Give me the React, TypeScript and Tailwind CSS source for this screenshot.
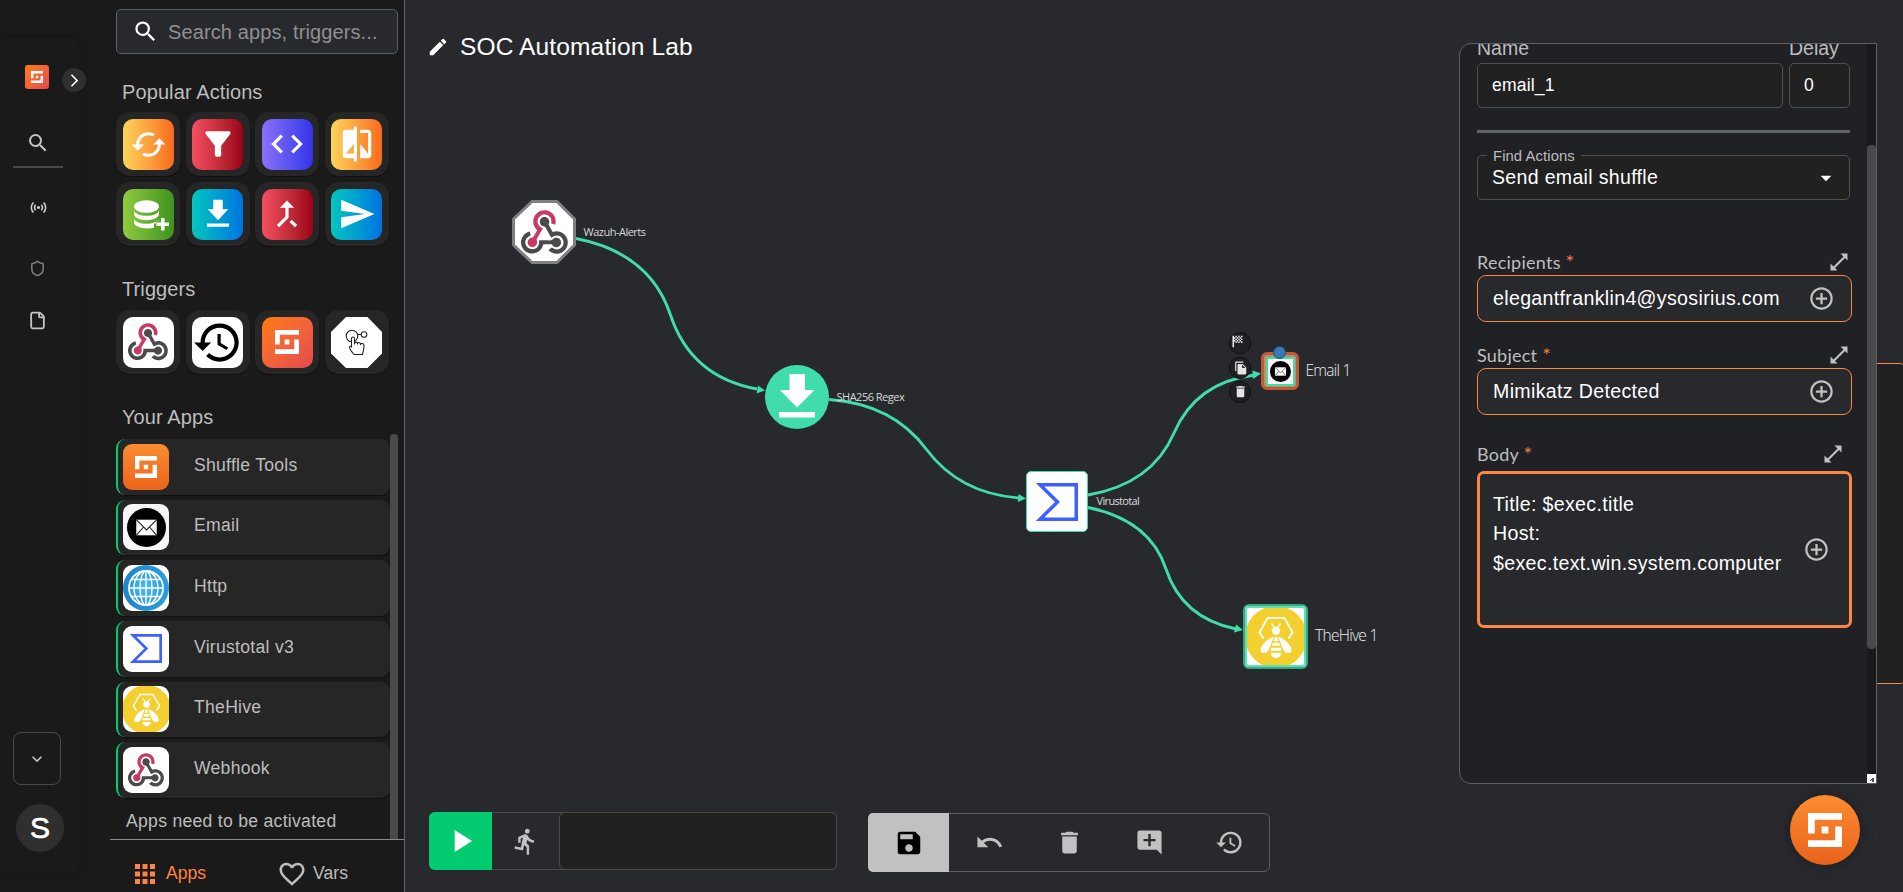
import React from "react";
import {
  MdSearch, MdCached, MdFilterAlt, MdCode, MdCompare, MdCallMerge, MdSend, MdHistory, MdEdit, MdSave, MdUndo,
  MdDelete, MdAddComment, MdFileCopy, MdPlayArrow, MdDirectionsRun, MdApps, MdFavoriteBorder, MdAddCircleOutline,
  MdArrowDropDown, MdKeyboardArrowDown, MdArrowForwardIos, MdSensors, MdSportsScore,
} from "react-icons/md";
import { File, Shield } from "lucide-react";

function ShuffleMark({ className }: { className: string }) {
  return (
    <svg viewBox="0 0 5 5" className={className} fill="#fff">
      <path d="M0 0H5V1H1V3H0ZM2 2H3V3H2ZM4 2H5V5H0V4H4Z" />
    </svg>
  );
}

function WebhookMark({ className }: { className: string }) {
  return (
    <svg viewBox="0 0 256 239" className={className}>
      <path fill="#C73A63" d="M119.54 100.5C108.93 118.34 98.76 135.61 88.39 152.75C85.72 157.15 84.4 160.74 86.53 166.33C92.41 181.79 84.12 196.83 68.54 200.91C53.84 204.76 39.52 195.1 36.6 179.37C34.02 165.44 44.83 151.78 60.18 149.61C61.47 149.42 62.78 149.4 64.94 149.24C72.47 136.62 80.18 123.7 88.3 110.07C73.61 95.47 64.87 78.39 66.8 57.23C68.17 42.27 74.05 29.35 84.8 18.75C105.39 -1.54 136.81 -4.82 161.05 10.75C184.33 25.71 195 54.85 185.91 79.78C179.05 77.92 172.15 76.05 164.56 73.99C167.42 60.13 165.31 47.68 155.96 37.01C149.78 29.97 141.85 26.28 132.84 24.92C114.76 22.19 97.02 33.8 91.76 51.54C85.78 71.67 94.82 88.11 119.54 100.5" />
      <path fill="#4B4B4B" d="M149.84 79.41C157.32 92.6 164.91 105.98 172.43 119.25C210.45 107.48 239.11 128.53 249.4 151.06C261.82 178.28 253.33 210.52 228.93 227.31C203.89 244.55 172.23 241.61 150.04 219.46C155.69 214.73 161.38 209.97 167.45 204.9C189.36 219.09 208.53 218.42 222.75 201.61C234.89 187.28 234.62 165.9 222.14 151.86C207.73 135.67 188.43 135.17 165.1 150.72C155.43 133.55 145.58 116.52 136.21 99.23C133.05 93.4 129.56 90.02 122.44 88.79C110.55 86.73 102.87 76.51 102.41 65.07C101.96 53.75 108.62 43.52 119.04 39.54C129.36 35.59 141.48 38.78 148.42 47.55C154.09 54.72 155.9 62.79 152.91 71.64C152.08 74.1 151.01 76.49 149.84 79.41" />
      <path fill="#4A4A4A" d="M167.71 187.21L121.94 187.21C117.55 205.25 108.07 219.82 91.75 229.09C79.05 236.29 65.37 238.73 50.81 236.38C24.01 232.05 2.09 207.92 .16 180.75C-2.03 149.96 19.13 122.6 47.33 116.45C49.28 123.52 51.25 130.66 53.2 137.72C27.32 150.92 18.36 167.55 25.61 188.35C31.98 206.66 50.09 216.69 69.75 212.81C89.83 208.85 99.96 192.16 98.72 165.38C117.76 165.38 136.81 165.18 155.85 165.48C163.28 165.59 169.02 164.82 174.62 158.27C183.84 147.48 200.81 148.46 210.74 158.64C220.89 169.05 220.4 185.8 209.66 195.77C199.3 205.39 182.93 204.87 173.24 194.51C171.25 192.37 169.68 189.84 167.71 187.21" />
    </svg>
  );
}

function VirustotalMark({ className }: { className: string }) {
  return (
    <svg viewBox="0 0 42 38" className={className} fill="none" stroke="#3D61FF" strokeWidth="3.5">
      <path d="M4 1.75H40.25V36.25H4L21.5 19Z" />
    </svg>
  );
}

function BeeMark({ className }: { className: string }) {
  return (
    <svg viewBox="0 0 60 60" className={className}>
      <circle cx="30" cy="30" r="30" fill="#F3D02F" />
      <path d="M18 31.5L14 25.5L22 11.5H38L46 25.5L42 31.5" fill="none" stroke="#fff" strokeWidth="1.8" />
      <path d="M28.5 21L25.5 16.5M31.5 21L34.5 16.5" stroke="#fff" strokeWidth="1.4" />
      <circle cx="30" cy="24" r="4" fill="#fff" />
      <path d="M28 29.5C22 31.5 15 38 15 42.5C15 47 21.5 46.5 23.5 41.5Z" fill="#fff" />
      <path d="M32 29.5C38 31.5 45 38 45 42.5C45 47 38.5 46.5 36.5 41.5Z" fill="#fff" />
      <path d="M29 30H31L32.2 34H27.8ZM27 35.5H33L34 38.5H26ZM25.5 40.3H34.5L35.2 43.3H24.8ZM24.7 45.3H35.3C35 48.5 32 50.5 30 50.5C28 50.5 25 48.5 24.7 45.3Z" fill="#fff" />
    </svg>
  );
}

function EmailMark({ className }: { className: string }) {
  return (
    <svg viewBox="0 0 40 40" className={className}>
      <circle cx="20" cy="20" r="20" fill="#000" />
      <rect x="9.5" y="12" width="21" height="16" fill="#fff" />
      <path d="M9.5 12L20 22.5L30.5 12M9.5 28L17 19.5M30.5 28L23 19.5" fill="none" stroke="#222" strokeWidth="1.1" />
    </svg>
  );
}

function GlobeMark() {
  return (
    <svg viewBox="0 0 46 46" className="size-full">
      <defs>
        <linearGradient id="ring" x1="0" y1="0" x2="1" y2="0">
          <stop offset="0" stopColor="#1d86c6" />
          <stop offset="1" stopColor="#2a9fdd" />
        </linearGradient>
        <radialGradient id="sea">
          <stop offset="0" stopColor="#4cbdf0" />
          <stop offset="1" stopColor="#2c9fdc" />
        </radialGradient>
      </defs>
      <circle cx="23" cy="23" r="23" fill="url(#ring)" />
      <g fill="none" stroke="#fff" strokeWidth="1.4">
        <circle cx="23" cy="23" r="17" fill="url(#sea)" strokeWidth="1.8" />
        <ellipse cx="23" cy="23" rx="12" ry="17" />
        <ellipse cx="23" cy="23" rx="6" ry="17" />
        <path d="M6 23H40M23 6V40M9 14.5H37M9 31.5H37" />
      </g>
    </svg>
  );
}

const OCTAGON = "M15 0H36.5L51 15V36.5L36.5 51H15L0 36.5V15Z";

function DatabasePlus() {
  return (
    <svg viewBox="0 0 51 51" className="size-full" fill="#fff">
      <ellipse cx="23.5" cy="17.5" rx="12.5" ry="6.3" />
      <path d="M11 21C11 24.5 17 26.8 23.5 26.8S36 24.5 36 21V25C36 28.500 30 31.200 23.500 31.200S11 28.500 11 25Z" />
      <path d="M11 29C11 32.500 17 34.800 23.500 34.800C29 34.800 34 33 35.500 30.500V31.800H33V34.500H31V38.800C22 40.500 11 38.500 11 33Z" />
      <path d="M38 29H41.5V33.5H46V37H41.5V41.5H38V37H33.5V33.5H38Z" />
    </svg>
  );
}

function DownloadGlyph({ className }: { className: string }) {
  return (
    <svg viewBox="0 0 24 24" className={className} fill="#fff">
      <path d="M5 20h14v-2H5v2zM18.5 9H15V3H9v6H5.5l6.5 7z" />
    </svg>
  );
}

function Tile({ fill, children }: { fill: string; children: React.ReactNode }) {
  return (
    <div className="flex size-16 items-center justify-center rounded-[14px] bg-[#262626] shadow-[0_1px_1px_rgba(0,0,0,.4)]">
      <div className={`flex size-[51px] items-center justify-center overflow-hidden rounded-[10px] ${fill}`}>{children}</div>
    </div>
  );
}

const YELLOW = "bg-linear-to-r from-[#fbd45c] to-[#f8691b]";
const RED = "bg-linear-to-r from-[#f54f60] to-[#9a0018]";
const PURPLE = "bg-linear-to-r from-[#8a70f9] to-[#3431e8]";
const GREEN = "bg-linear-to-r from-[#8fcb40] to-[#3d931f]";
const TEAL = "bg-linear-to-r from-[#0bc6bd] to-[#0372e0]";

function AppRow({ name, children, fill = "bg-white" }: { name: string; children: React.ReactNode; fill?: string }) {
  return (
    <div className="flex h-[55.67px] shrink-0 items-center rounded-[9px] border-l-2 border-[#02cb70] bg-[#262626] pl-[5px] shadow-[0_1px_1px_rgba(0,0,0,.4)]">
      <div className={`flex size-[46px] items-center justify-center overflow-hidden rounded-[9px] ${fill}`}>{children}</div>
      <span className="-mt-1 ml-[25px] text-[17.6px] tracking-[.27px] text-[#bdbdbd]">{name}</span>
    </div>
  );
}

function Rail() {
  return (
    <nav className="relative mt-[38px] flex h-[837px] w-[79px] shrink-0 flex-col rounded-r-lg bg-[#1a1a1a] shadow-[0_0_10px_rgba(0,0,0,.2)]">
      <div className="mt-[27px] ml-[25px] flex size-6 items-center justify-center rounded-[3px] bg-linear-to-br from-[#ff7c00] to-[#e5484d]">
        <ShuffleMark className="size-3" />
      </div>
      <div className="absolute top-[30px] left-[62px] flex size-6 items-center justify-center rounded-full bg-[#2f2f2f]">
        <MdArrowForwardIos className="size-[15px] text-white" />
      </div>
      <MdSearch className="mt-[42px] ml-[26px] size-6 text-[#c4c4c4]" />
      <div className="mt-[11px] ml-[13px] h-[2px] w-[50px] bg-[#494949]" />
      <MdSensors className="mt-[30px] ml-[28.5px] size-[19px] text-[#cfcfcf]" />
      <Shield className="mt-[43px] ml-[29px] size-[17px] text-[#7d7d7d]" strokeWidth={2.2} />
      <File className="mt-[34px] ml-[28px] size-[19px] text-[#c4c4c4]" strokeWidth={2.3} />
      <div className="mt-auto ml-[13px] flex h-[53px] w-12 items-center justify-center rounded-lg border border-[#494949]">
        <MdKeyboardArrowDown className="size-5 text-[#c4c4c4]" />
      </div>
      <div className="mt-[19px] mb-[23px] ml-4 flex size-12 items-center justify-center rounded-full bg-[#2f2f2f] pb-px text-[30px] leading-none text-white [-webkit-text-stroke:.7px_white]">
        S
      </div>
    </nav>
  );
}

function Sidebar() {
  return (
    <aside className="ml-[31px] flex h-full w-[295px] shrink-0 flex-col border-r border-[#5c5f64] text-[#bdbdbd]">
      <div className="mt-[9px] ml-[6px] flex h-[45px] w-[282px] shrink-0 items-center rounded-[5px] border border-[#5c5f64] bg-[#27292d]">
        <MdSearch className="ml-[14.5px] size-[27px] text-white" />
        <span className="ml-[9.500px] text-[20px] tracking-[.12px] text-[#8f9092]">Search apps, triggers...</span>
      </div>
      <h2 className="mt-[23px] ml-3 h-[30px] shrink-0 text-[20px] leading-[30px] tracking-[.1px]">Popular Actions</h2>
      <div className="mt-[5px] ml-[6px] grid w-[273px] shrink-0 grid-cols-4 justify-between gap-x-[5.67px] gap-y-[6px]">
        <Tile fill={YELLOW}><MdCached className="size-[37px] text-white" /></Tile>
        <Tile fill={RED}><MdFilterAlt className="size-[38px] text-white" /></Tile>
        <Tile fill={PURPLE}><MdCode className="size-[38px] text-white" /></Tile>
        <Tile fill={YELLOW}><MdCompare className="size-[38px] text-white" /></Tile>
        <Tile fill={GREEN}><DatabasePlus /></Tile>
        <Tile fill={TEAL}><DownloadGlyph className="size-[38px]" /></Tile>
        <Tile fill={RED}><MdCallMerge className="size-[38px] text-white" /></Tile>
        <Tile fill={TEAL}><MdSend className="size-[38px] text-white" /></Tile>
      </div>
      <h2 className="mt-[28px] ml-3 h-[30px] shrink-0 text-[20px] leading-[30px] tracking-[.1px]">Triggers</h2>
      <div className="mt-[6px] ml-[6px] grid w-[273px] shrink-0 grid-cols-4 gap-x-[5.67px]">
        <Tile fill="bg-white"><WebhookMark className="w-10" /></Tile>
        <Tile fill="bg-white"><MdHistory className="size-[51px] text-black" /></Tile>
        <Tile fill="bg-linear-to-br from-[#ff7c00] to-[#e5484d]"><ShuffleMark className="size-6" /></Tile>
        <Tile fill="">
          <svg viewBox="0 0 51 51" className="size-full">
            <path d={OCTAGON} fill="#fff" />
            <g fill="#fff" stroke="#222" strokeWidth="1.1" strokeLinejoin="round">
              <path d="M27 17.5H30" />
              <circle cx="21" cy="19" r="5.8" />
              <circle cx="33" cy="17.5" r="2.8" />
              <path d="M20.5 30V21.5C20.5 19.500 23.500 19.500 23.500 21.500V27C23.500 24.500 26.500 24.500 26.500 27C26.500 25 29.500 25 29.500 27.500C29.500 26 33 26 33 28.500C33 32 32.500 33.500 31.500 37.500H23C21.500 35 19 33.500 18.500 30.500C18.500 29 20 29 20.500 30Z" />
            </g>
          </svg>
        </Tile>
      </div>
      <h2 className="mt-[28px] ml-3 h-[30px] shrink-0 text-[20px] leading-[30px] tracking-[.1px]">Your Apps</h2>
      <div className="mt-[2px] ml-[6px] flex h-[405px] w-[282px] shrink-0 overflow-hidden">
        <div className="flex w-[274px] shrink-0 flex-col gap-[5px] pt-[5px]">
          <AppRow name="Shuffle Tools" fill="bg-linear-to-b from-[#fc8c31] to-[#e9651a]"><ShuffleMark className="size-[22px]" /></AppRow>
          <AppRow name="Email" fill="bg-[#f7f7f7]"><EmailMark className="size-[39px]" /></AppRow>
          <AppRow name="Http"><GlobeMark /></AppRow>
          <AppRow name="Virustotal v3"><VirustotalMark className="w-8" /></AppRow>
          <AppRow name="TheHive"><BeeMark className="size-[49px] shrink-0" /></AppRow>
          <AppRow name="Webhook"><WebhookMark className="w-9" /></AppRow>
          <p className="mt-[6px] ml-[10px] text-[17.6px] leading-6 tracking-[.28px] whitespace-nowrap">Apps need to be activated</p>
        </div>
        <div className="w-2 rounded-t-md bg-[#4a4a4a]" />
      </div>
      <div className="flex flex-1 items-center border-t border-[#87898c] pt-[15px] text-[17.6px]">
        <MdApps className="ml-5 size-[30px] text-[#ff8544]" />
        <span className="ml-[6px] text-[#ff8544]">Apps</span>
        <MdFavoriteBorder className="ml-[71px] size-[30px]" />
        <span className="ml-[6px]">Vars</span>
      </div>
    </aside>
  );
}

function Toolbars() {
  return (
    <div className="mb-5 flex items-end">
      <div className="mb-[2px] flex h-[58px] w-[408px] rounded-md border border-[#494949]">
        <div className="-my-px -ml-px flex w-[63px] items-center justify-center rounded-l-md bg-[#02cb70]">
          <MdPlayArrow className="size-[38px] text-white" />
        </div>
        <div className="flex w-[67px] items-center justify-center">
          <MdDirectionsRun className="size-[29px] text-[#c1c1c1]" />
        </div>
        <div className="-my-px -mr-px flex-1 rounded-md border border-[#494949] bg-[#212121]" />
      </div>
      <div className="ml-[31px] flex h-[59px] w-[402px] rounded-md border border-[#5d5f63] text-[#c1c1c1]">
        <div className="-my-px -ml-px flex w-[81px] items-center justify-center rounded-l-[5px] bg-[#c1c1c1] text-black"><MdSave className="size-[30px]" /></div>
        <div className="flex w-20 items-center justify-center"><MdUndo className="size-[29px]" /></div>
        <div className="flex w-20 items-center justify-center"><MdDelete className="size-[29px]" /></div>
        <div className="flex w-20 items-center justify-center"><MdAddComment className="size-[29px]" /></div>
        <div className="flex w-20 items-center justify-center"><MdHistory className="size-[29px]" /></div>
      </div>
    </div>
  );
}

function Graph() {
  return (
    <div className="absolute inset-0 overflow-hidden font-['Open_Sans','Noto_Sans',sans-serif] text-[#d8d9da]">
      <svg viewBox="405 0 1498 892" className="absolute inset-0 h-full w-full" fill="none">
        <g stroke="#41DCAB" strokeWidth="2.9">
          <path d="M576 238.500Q650 253 670.500 315Q691 377 757 389" />
          <path d="M829 399.500Q893 404 926.500 449.500Q960 494 1020 498" />
          <path d="M1088 495Q1152 484 1174 433Q1196 382 1255 375" />
          <path d="M1088 507.500Q1150 520 1166 569Q1182 618 1236 629" />
        </g>
        <g fill="#41DCAB">
          <path d="M765 390.500L756.500 393.500L758 385.500Z" />
          <path d="M1026 498.500L1018 502L1018.500 494Z" />
          <path d="M1261 373.500L1253 379L1252.500 370.500Z" />
          <path d="M1243 630L1234 632.500L1236 624.500Z" />
        </g>
        <path d="M532 201.500H557L574.500 219V245L557 262.500H532L513.500 245V219Z" fill="#fff" stroke="#808080" strokeWidth="3" strokeLinejoin="round" />
        <circle cx="797" cy="397" r="32" fill="#41DCAB" />
        <path d="M789.500 374H805V390H814.500L797 407.500L780 390H789.500Z" fill="#fff" />
        <path d="M779 412H815V417.500H779Z" fill="#fff" />
        <g fill="#1f2023" stroke="#111214">
          <circle cx="1240" cy="343.300" r="10.700" />
          <circle cx="1240" cy="367.800" r="10.700" />
          <circle cx="1240" cy="392" r="10.700" />
        </g>
      </svg>
      <WebhookMark className="absolute top-[210px] left-[116px] w-[47px]" />
      <span className="absolute top-[223.5px] left-[178.5px] text-[11px] leading-4 tracking-[-.5px]">Wazuh-Alerts</span>
      <span className="absolute top-[388.5px] left-[431.5px] text-[11px] leading-4 tracking-[-.5px]">SHA256 Regex</span>
      <div className="absolute top-[471px] left-[621px] flex h-[61px] w-[62px] items-center justify-center rounded-[5px] border border-[#41DCAB] bg-white">
        <VirustotalMark className="w-[42px]" />
      </div>
      <span className="absolute top-[492.5px] left-[691.5px] text-[11px] leading-4 tracking-[-.65px]">Virustotal</span>
      <div className="absolute top-[604px] left-[838px] flex size-[65px] items-center justify-center overflow-hidden rounded-[6px] border-2 border-[#36a983] bg-white">
        <BeeMark className="size-[62px] shrink-0" />
        <div className="absolute inset-0 rounded-[4px] border-2 border-[#5ce0b6]" />
      </div>
      <span className="absolute top-[622.5px] left-[910px] text-[15.5px] leading-6 font-light tracking-[-.7px] text-[#f0f0f0]">TheHive 1</span>
      <div className="absolute top-[352px] left-[856px] flex size-[38px] items-center justify-center rounded-[6px] border-[3px] border-[#bd5a3b] bg-[#c98b62] p-[1.5px]">
        <div className="flex size-full items-center justify-center border-2 border-[#41DCAB] bg-[#f7f7f7]">
          <EmailMark className="size-[21px] shrink-0" />
        </div>
      </div>
      <div className="absolute top-[346px] left-[868px] size-[13px] rounded-full border border-[#1c4e7c] bg-[#337ab7]" />
      <span className="absolute top-[357.5px] left-[900.5px] text-[15.5px] leading-6 font-light tracking-[-.75px] text-[#f0f0f0]">Email 1</span>
      <MdSportsScore className="absolute top-[333px] left-[824px] size-[17px] text-[#f4f4f4]" />
      <MdFileCopy className="absolute top-[361px] left-[828.5px] size-[14px] text-[#e4e4e4]" />
      <MdDelete className="absolute top-[384px] left-[827.5px] size-[15px] text-[#e4e4e4]" />
    </div>
  );
}

function FieldLabel({ text, inset }: { text: string; inset: string }) {
  return (
    <div className={`flex h-6 items-center justify-between ${inset}`}>
      <span className="-mt-[2px] font-['Lato','Open_Sans',sans-serif] text-[18px] tracking-[.25px] text-[#bdbdbd]">
        {text} <span className="text-[20px] leading-none text-[#ff7a3d]">*</span>
      </span>
      <svg viewBox="0 0 18 18" className="-mt-[3px] size-[18px]" fill="#c1c1c1">
        <path d="M10.500 .5H17.500V7.500L15 5L5 15L7.500 17.500H.5V10.500L3.500 13.500L13.500 3.500Z" />
      </svg>
    </div>
  );
}

function Inspector() {
  return (
    <div className="relative mt-[43px] flex h-[741px] w-[418px] overflow-hidden rounded-xl rounded-r-none border border-[#5c5f64] bg-[#202125]">
      <div className="flex flex-1 flex-col pl-[17px] text-white">
        <div className="-mt-[9px] flex h-[27px] text-[19.5px] leading-[27px] text-[#bdbdbd]">
          <span className="w-[312px]">Name</span>
          <span>Delay</span>
        </div>
        <div className="mt-[1px] flex gap-[6px] text-[17.6px] tracking-[.15px]">
          <div className="flex h-[45px] w-[306px] items-center rounded-[5px] border border-[#4f5052] bg-[#212121] pl-[14px]">email_1</div>
          <div className="flex h-[45px] w-[61px] items-center rounded-[5px] border border-[#4f5052] bg-[#212121] pl-[14px]">0</div>
        </div>
        <div className="mt-[22px] h-[3px] w-[373px] bg-[#5e6366]" />
        <div className="relative mt-[22px] flex h-[45px] w-[373px] items-center justify-between rounded-[5px] border border-[#4f5052] bg-[#212121] pr-[10px] pl-[14px]">
          <span className="absolute -top-[12px] left-[9px] bg-linear-to-b from-[#202125] from-50% to-[#212121] to-50% px-[6px] text-[14.8px] leading-6 tracking-[.1px] text-[#bdbdbd]">
            Find Actions
          </span>
          <span className="text-[19.5px] tracking-[.34px]">Send email shuffle</span>
          <MdArrowDropDown className="size-[26px]" />
        </div>
        <div className="mt-[51px] w-[375px]">
          <FieldLabel text="Recipients" inset="pr-1" />
          <div className="flex h-[47px] items-center justify-between rounded-[9px] border border-[#ff8544] bg-[#27292d] pr-[16px] pl-[15px] text-[19.6px] tracking-[.33px]">
            elegantfranklin4@ysosirius.com
            <MdAddCircleOutline className="size-[27px] text-[#c1c1c1]" />
          </div>
        </div>
        <div className="mt-[22px] w-[375px]">
          <FieldLabel text="Subject" inset="pr-1" />
          <div className="flex h-[47px] items-center justify-between rounded-[9px] border border-[#ff8544] bg-[#27292d] pr-[16px] pl-[15px] text-[19.6px] tracking-[.33px]">
            Mimikatz Detected
            <MdAddCircleOutline className="size-[27px] text-[#c1c1c1]" />
          </div>
        </div>
        <div className="mt-[28px] w-[375px]">
          <FieldLabel text="Body" inset="pr-[10px]" />
          <div className="mt-[4px] flex h-[157px] items-center justify-between rounded-[7px] border-[3px] border-[#ff8544] bg-[#27292d] pr-[19px] pl-[13px] text-[19.6px] leading-[29.2px] tracking-[.33px]">
            <p className="-mt-[31px]">
              Title: $exec.title
              <br />
              Host:
              <br />
              $exec.text.win.system.computer
            </p>
            <MdAddCircleOutline className="size-[27px] shrink-0 text-[#c1c1c1]" />
          </div>
        </div>
      </div>
      <div className="flex w-[9px] flex-col bg-[#1a1a1a]">
        <div className="mt-[101px] h-[504px] rounded-[4px] bg-[#4a4a4a]" />
        <svg viewBox="0 0 9 9" className="mt-auto h-[9px] w-[9px] bg-white">
          <path d="M3 6H4V5H5V4H7V8H5V6L4 7H3Z" fill="#555" />
        </svg>
      </div>
    </div>
  );
}

export default function App() {
  return (
    <div className="flex h-[892px] w-[1903px] overflow-hidden bg-[#1a1a1a] font-['Liberation_Sans',Arial,sans-serif]">
      <Rail />
      <Sidebar />
      <main className="relative flex flex-1 bg-[#27292d]">
        <Graph />
        <div className="relative flex flex-1 flex-col justify-between pl-6">
          <div className="mt-[31px] flex h-8 items-center">
            <MdEdit className="-ml-[2px] size-[22px] text-white" />
            <h1 className="ml-[11px] text-[24.5px] leading-8 tracking-[.14px] text-white">SOC Automation Lab</h1>
          </div>
          <Toolbars />
        </div>
        <div className="absolute top-[363px] right-0 h-[321px] w-[60px] rounded-r-[3px] border border-r-0 border-[#ff8544] bg-[#212121]" />
        <div className="relative w-[444px]">
          <Inspector />
          <div className="mt-[11px] ml-[331px] flex size-[70px] items-center justify-center rounded-full bg-linear-to-b from-[#fd8c31] to-[#e8631b] shadow-[0_0_14px_rgba(0,0,0,.3)]">
            <ShuffleMark className="size-[34px]" />
          </div>
        </div>
      </main>
    </div>
  );
}
